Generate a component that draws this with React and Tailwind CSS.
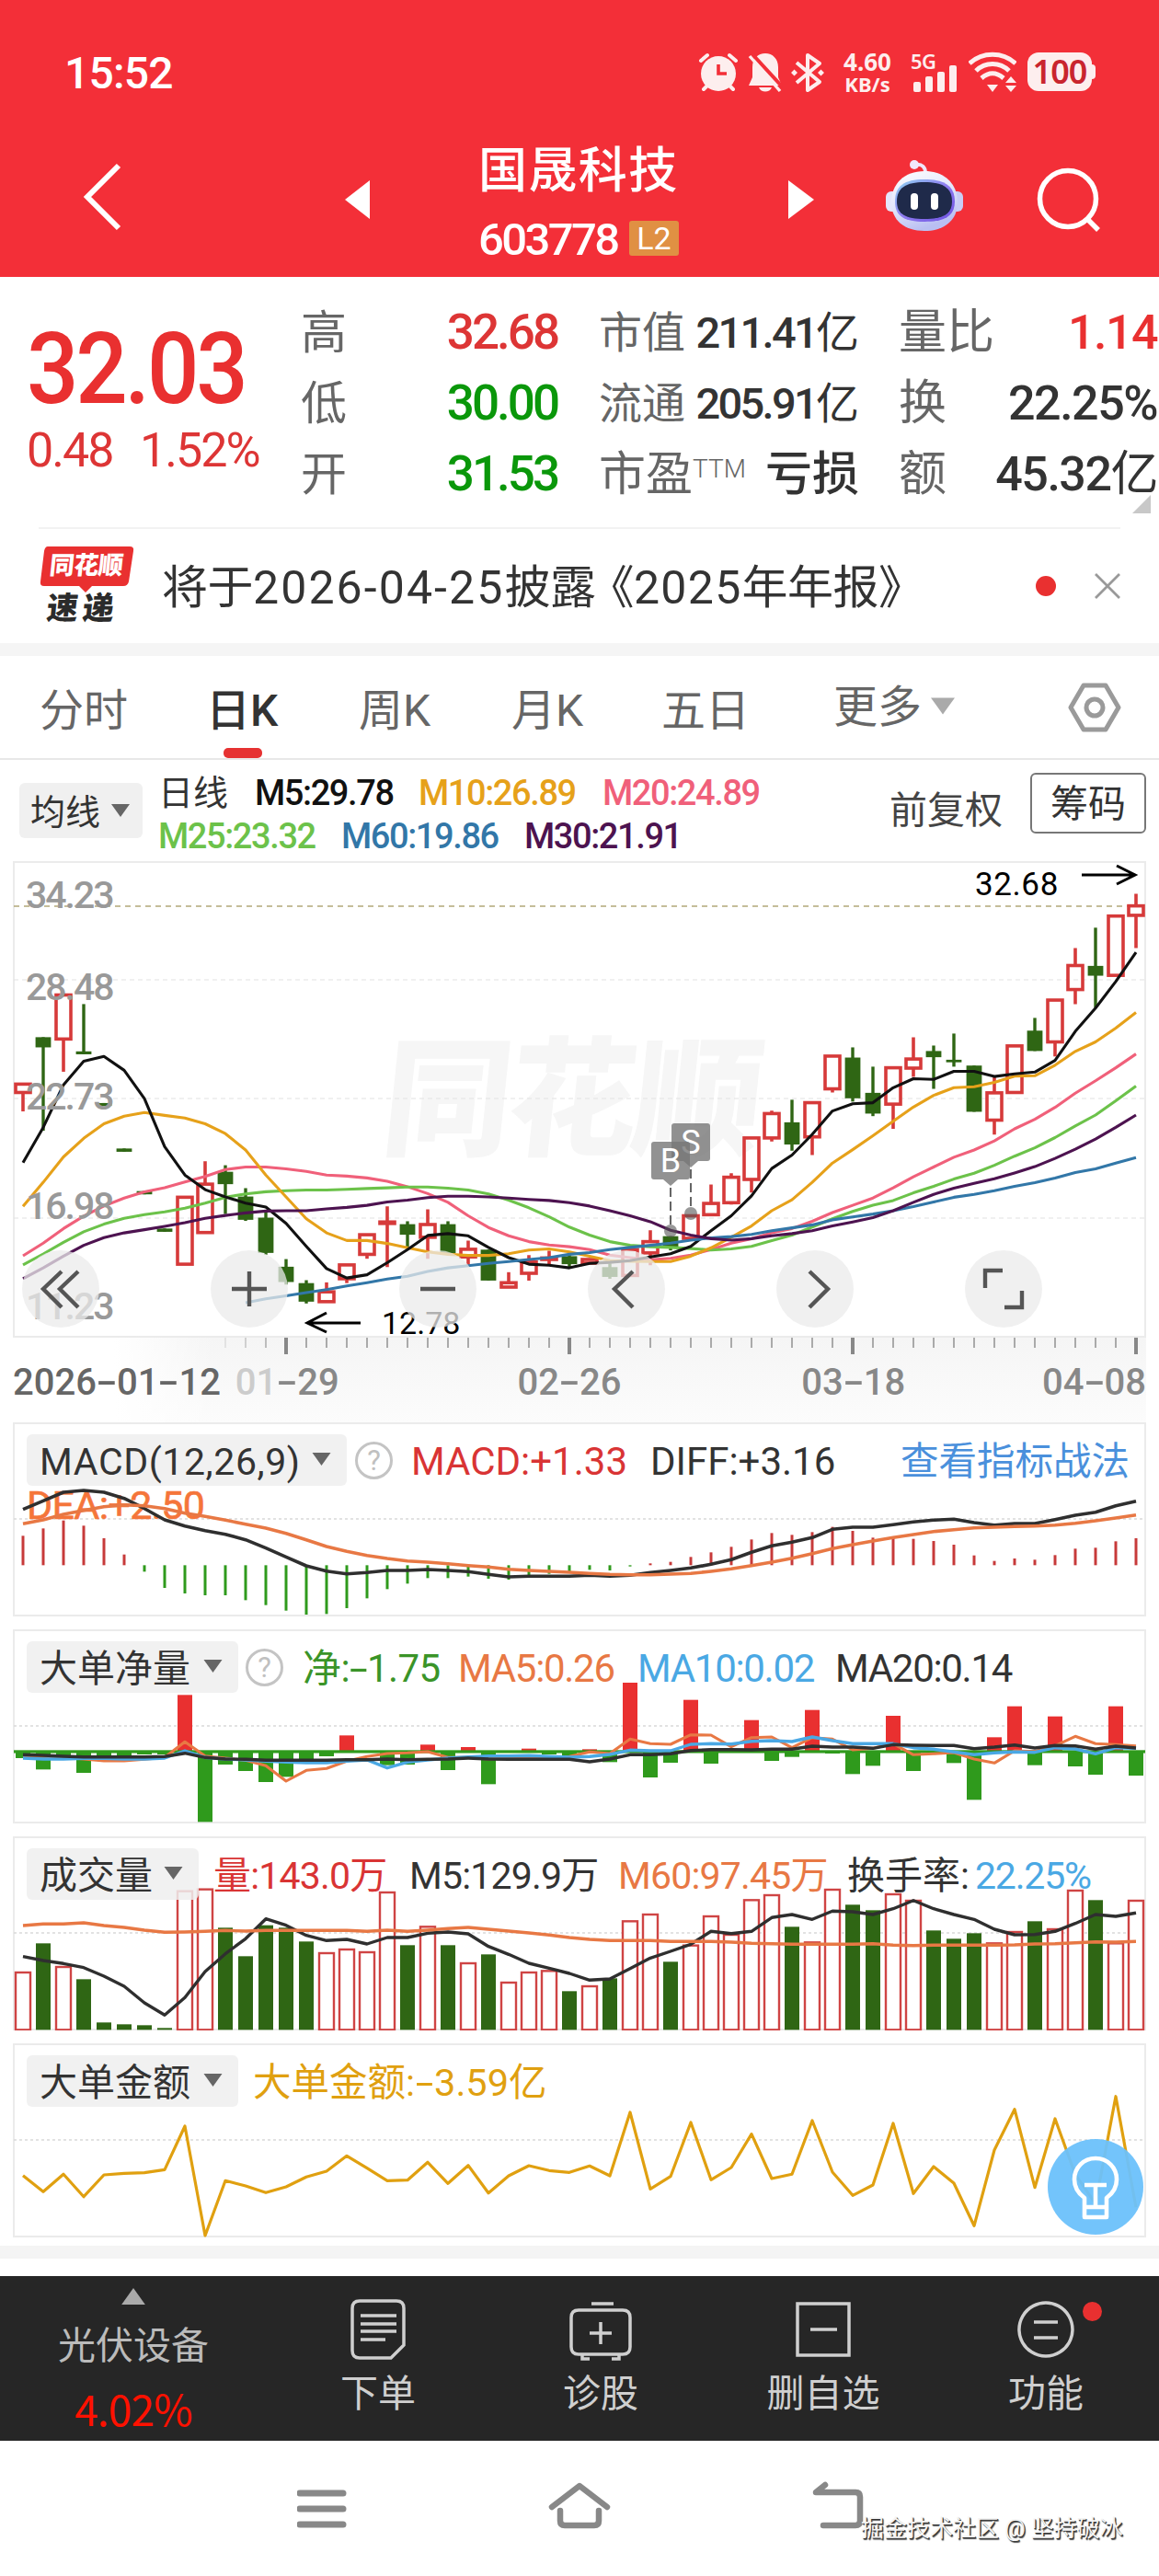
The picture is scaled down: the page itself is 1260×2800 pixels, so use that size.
import React from 'react';

const STEP = 22;
const FIRST_X = 25;
const xAt = (i) => FIRST_X + i * STEP;

// [colour, high, body top, body bottom, low]
const CANDLES = [
  ['r', 655, 655, 678, 730], ['g', 526, 526, 554, 783], ['r', 410, 410, 531, 621],
  ['g', 435, 565, 573, 573], ['g', 707, 707, 715, 715], ['g', 832, 832, 841, 841],
  ['g', 949, 949, 958, 958], ['g', 1052, 1052, 1061, 1061], ['r', 966, 966, 1150, 1150],
  ['r', 867, 930, 1063, 1063], ['g', 878, 896, 930, 1012], ['g', 941, 964, 1028, 1031],
  ['g', 1005, 1022, 1119, 1124], ['g', 1136, 1157, 1199, 1206], ['g', 1194, 1202, 1253, 1258],
  ['r', 1200, 1226, 1253, 1253], ['r', 1152, 1152, 1190, 1202], ['r', 1069, 1069, 1123, 1135],
  ['r', 991, 1034, 1038, 1158], ['g', 1032, 1040, 1069, 1105], ['r', 999, 1041, 1076, 1135],
  ['g', 1032, 1040, 1120, 1120], ['r', 1085, 1109, 1130, 1154], ['g', 1110, 1110, 1195, 1195],
  ['r', 1172, 1201, 1213, 1213], ['r', 1125, 1144, 1175, 1195], ['r', 1113, 1133, 1137, 1152],
  ['g', 1125, 1128, 1150, 1158], ['r', 1135, 1137, 1147, 1147], ['g', 1148, 1158, 1185, 1190],
  ['r', 1110, 1110, 1181, 1181], ['r', 1057, 1088, 1119, 1153], ['g', 1073, 1073, 1102, 1112],
  ['r', 1017, 1017, 1079, 1079], ['r', 931, 983, 1014, 1014], ['r', 900, 911, 981, 986],
  ['r', 803, 803, 917, 953], ['r', 728, 736, 803, 813], ['g', 698, 760, 821, 838],
  ['r', 706, 706, 800, 850], ['r', 578, 578, 668, 678], ['g', 554, 582, 694, 703],
  ['g', 607, 679, 736, 743], ['r', 610, 610, 710, 778], ['r', 526, 586, 611, 635],
  ['g', 549, 564, 581, 668], ['g', 516, 588, 595, 607], ['g', 604, 604, 731, 731],
  ['r', 633, 679, 754, 794], ['r', 550, 550, 678, 678], ['g', 473, 508, 564, 564],
  ['r', 424, 424, 539, 579], ['r', 281, 329, 395, 435], ['g', 225, 330, 357, 445],
  ['r', 193, 193, 356, 356], ['r', 132, 165, 191, 281],
];

const MA_LINES = [
  { color: '#f0607a', from: 0, data: [1127,1092,1052,1018,990,968,951,940,924,909,890,883,883,888,895,905,908,913,922,937,956,980,1017,1049,1072,1088,1097,1102,1110,1125,1132,1138,1134,1125,1110,1092,1080,1064,1052,1032,1008,988,968,940,910,883,856,836,811,778,752,719,680,646,610,572] },
  { color: '#6cc24a', from: 0, data: [1152,1122,1090,1061,1040,1024,1014,1006,996,982,966,957,951,948,946,946,944,942,940,938,938,941,946,957,974,995,1020,1048,1070,1088,1098,1102,1104,1107,1111,1108,1101,1085,1070,1048,1025,1005,988,975,954,936,916,900,878,853,830,802,770,740,701,660] },
  { color: '#e6a11a', from: 0, data: [991,925,855,804,764,743,733,741,748,764,791,836,905,965,1025,1064,1085,1085,1093,1105,1116,1123,1126,1126,1121,1111,1108,1116,1128,1140,1142,1143,1143,1128,1105,1076,1045,1003,973,925,872,835,797,757,718,686,665,662,650,633,632,603,565,539,501,458] },
  { color: '#111111', from: 0, data: [871,774,657,592,579,617,695,827,905,945,965,982,993,1038,1101,1162,1188,1179,1146,1110,1071,1066,1072,1104,1132,1150,1153,1160,1148,1145,1140,1130,1121,1101,1058,1017,962,887,850,793,729,709,706,665,640,642,620,620,634,627,622,590,510,446,373,293] },
  { color: '#3277a8', from: 11, data: [1256,1245,1237,1228,1220,1210,1201,1191,1183,1170,1160,1154,1148,1143,1137,1132,1123,1118,1110,1104,1098,1092,1084,1078,1074,1068,1058,1050,1042,1028,1020,1012,1003,992,979,966,958,948,936,926,913,898,888,872,857] },
  { color: '#4d1350', from: 0, data: [1190,1160,1128,1098,1077,1064,1055,1046,1036,1024,1016,1009,1004,1003,1003,998,994,988,979,974,967,963,963,965,968,972,975,981,990,1003,1017,1033,1057,1070,1080,1084,1080,1072,1066,1058,1045,1034,1022,1003,980,958,941,928,915,899,882,859,834,806,774,740] },
];

const MACD_BARS = [417,393,367,384,425,478,534,587,605,611,611,627,643,661,674,672,653,621,591,573,555,555,550,557,560,545,541,535,528,530,517,507,502,486,471,453,429,408,414,405,388,401,423,424,427,434,446,481,499,491,495,480,459,456,435,425];
const MACD_DIFF = [331,303,275,269,275,295,328,365,385,400,412,430,457,486,515,532,541,537,530,530,527,530,534,543,551,549,549,549,546,549,546,537,530,522,510,495,471,450,438,423,396,389,389,381,372,366,363,374,382,377,377,364,350,340,319,304];
const MACD_DEA = [378,365,347,334,322,316,319,328,343,354,366,379,392,409,430,452,468,481,491,499,503,508,514,519,526,530,533,536,540,543,544,544,542,540,533,525,514,503,490,475,459,446,434,423,413,403,397,391,389,387,385,382,376,368,359,349];

const NET_BARS = [452,489,447,500,447,445,440,440,246,660,473,494,530,513,460,446,378,433,475,473,408,491,416,537,433,421,440,447,423,465,206,515,467,262,470,433,328,461,448,295,437,504,477,314,494,432,468,588,384,283,475,316,479,506,283,509];
const NET_MA5 = [445,447,450,455,461,461,456,450,399,445,452,459,477,527,492,486,462,447,437,435,431,450,450,455,450,452,450,447,432,437,390,405,407,376,377,415,385,383,418,385,390,425,420,405,441,438,434,455,468,428,430,412,381,405,408,412];
const NET_MA10 = [452,455,455,453,453,455,455,452,428,450,455,458,462,465,467,467,462,458,484,465,458,452,448,445,445,444,447,449,447,440,426,428,428,407,405,406,397,395,398,383,395,405,405,405,418,423,432,441,435,432,433,418,422,438,418,420];
const NET_MA20 = [441,443,446,448,448,448,448,447,436,450,455,456,459,459,459,459,457,457,455,457,456,455,452,455,456,456,456,456,464,455,441,441,438,427,424,424,425,423,423,413,416,416,420,408,410,411,411,421,416,409,419,411,412,423,413,419];

const VOL_BARS = 'r458 g366 r440 g483 g624 g630 g633 g642 r193 r187 g315 g408 g307 g315 g360 r395 r383 r392 r197 g372 r309 g372 r428 g402 r491 r458 r453 g522 r503 g480 r291 r269 g426 r370 r275 r335 r222 r206 g312 r360 r188 g240 g258 r203 r224 g324 g351 g333 r363 r326 g294 r317 r191 g225 r363 r224'.split(' ');
const VOL_M5 = [409,422,432,445,473,506,560,600,543,458,400,351,286,307,340,357,353,368,347,347,333,329,335,376,402,431,447,464,486,482,448,414,392,369,327,334,327,282,272,288,261,263,272,253,226,253,272,288,320,338,337,327,301,272,278,267];
const VOL_M60 = [308,303,303,299,308,314,323,330,329,327,324,326,324,324,324,324,324,327,323,327,323,318,314,320,326,332,339,347,353,357,357,357,360,360,360,362,366,367,369,369,369,369,367,372,373,372,372,372,372,371,368,367,364,361,362,360];

const AMOUNT = [463,516,459,532,461,456,454,444,302,659,480,497,519,500,468,449,399,439,480,478,420,489,430,520,464,431,447,453,432,464,257,507,466,290,477,437,328,473,459,284,452,528,494,293,522,434,488,627,380,247,502,278,460,555,205,567];

const Line = ({ data, y, color, width = 3.1, from = 0 }) => (
  <polyline
    points={data.map((v, i) => `${xAt(i + from)},${y(v).toFixed(1)}`).join(' ')}
    fill="none"
    stroke={color}
    strokeWidth={width}
    strokeLinejoin="round"
  />
);

const Caret = ({ className = '' }) => (
  <svg viewBox="0 0 20 14" className={`shrink-0 ${className}`}>
    <path d="M0 0H20L10 14Z" fill="currentColor" />
  </svg>
);

const StatusBar = () => (
  <div className="h-[156px] pt-[56px] pl-[70px] pr-[69px] flex items-start text-white">
    <span className="flex-1 text-[48px] font-medium leading-[48px] tracking-[-0.8px]">15:52</span>
    <svg viewBox="0 0 44 44" className="w-11 h-11 mr-[10px] mt-px">
      <g fill="none" stroke="#fdeeee" strokeWidth="4" strokeLinecap="round">
        <path d="M3 9L10 3M34 3L41 9M6 40L11 35M38 40L33 35" />
      </g>
      <circle cx="22" cy="23" r="19" fill="#fdeeee" />
      <path d="M22 13V23H31" fill="none" stroke="#f32f38" strokeWidth="3.6" />
    </svg>
    <svg viewBox="0 0 38 44" className="w-[38px] h-11 mr-[9px] mt-px">
      <path d="M19 1C27 1 33 7 33 16V27L37 36H1L5 27V16C5 7 11 1 19 1Z" fill="#fdeeee" />
      <path d="M12 38H26C24 44 14 44 12 38Z" fill="#fdeeee" />
      <path d="M4 1L38 38" stroke="#f32f38" strokeWidth="4" />
      <path d="M2 4L35 42" stroke="#fdeeee" strokeWidth="3.4" />
    </svg>
    <svg viewBox="0 0 36 44" className="w-9 h-11 mr-[18px] mt-px">
      <g fill="none" stroke="#fdeeee" strokeWidth="4" strokeLinejoin="round">
        <path d="M6 11L31 32L18 41V3L31 12L6 33" />
      </g>
      <path d="M0 22L3.500 18.500L7 22L3.500 25.500ZM29 22L32.500 18.500L36 22L32.500 25.500Z" fill="#fdeeee" />
    </svg>
    <div className="w-[58px] mr-[18px] flex flex-col items-center font-['Noto_Sans',sans-serif] font-bold text-[#fdeeee]">
      <span className="text-[26px] leading-[22px] h-[23px]">4.60</span>
      <span className="text-[22px] leading-[24px]">KB/s</span>
    </div>
    <div className="relative w-[52px] h-11 mr-[11px] font-['Noto_Sans',sans-serif] font-semibold text-[#fdeeee]">
      <span className="absolute left-0 top-0 text-[22px] leading-[20px] tracking-[-0.5px]">5G</span>
      <svg viewBox="0 0 52 44" className="absolute inset-0 w-[52px] h-11">
        <g fill="#fdeeee">
          <rect x="3" y="33" width="8" height="11" rx="2" />
          <rect x="16" y="27" width="8" height="17" rx="2" />
          <rect x="29" y="22" width="8" height="22" rx="2" />
          <rect x="42" y="15" width="8" height="29" rx="2" />
        </g>
      </svg>
    </div>
    <svg viewBox="0 0 52 44" className="w-[52px] h-11 mr-[12px]">
      <g fill="none" stroke="#fdeeee" strokeWidth="5">
        <path d="M1 13C15 0 37 0 51 13M8 21C18 11 34 11 44 21M14 29C22 22 30 22 38 29" />
      </g>
      <path d="M20 36H32L26 44ZM40 34L46 27L52 34ZM40 37H52L46 44Z" fill="#fdeeee" />
    </svg>
    <div className="flex items-center mt-px">
      <div className="w-[70px] h-[42px] rounded-[12px] bg-[#fdeeee] flex items-center justify-center text-[#c9252e] text-[36px] font-semibold leading-none font-['Noto_Sans',sans-serif] tracking-[-1px]">
        100
      </div>
      <div className="w-[4px] h-[16px] rounded-r bg-[#fdeeee]" />
    </div>
  </div>
);

const Robot = () => (
  <svg viewBox="0 0 84 78" className="w-[84px] h-[78px]">
    <defs>
      <linearGradient id="shell" x1="0" y1="0" x2="0.4" y2="1">
        <stop offset="0" stopColor="#ffffff" />
        <stop offset="0.6" stopColor="#dfe3fa" />
        <stop offset="1" stopColor="#b9bff2" />
      </linearGradient>
      <linearGradient id="rim" x1="0" y1="0" x2="1" y2="1">
        <stop offset="0" stopColor="#8fd6f2" />
        <stop offset="0.5" stopColor="#8f7cf0" />
        <stop offset="1" stopColor="#6c4fe0" />
      </linearGradient>
    </defs>
    <path d="M32 5C40 4 43 8 43 14" fill="none" stroke="#efe6fb" strokeWidth="4" />
    <circle cx="31" cy="5" r="5" fill="#f1e8fb" />
    <rect x="0" y="34" width="14" height="22" rx="6" fill="#e4e6fb" />
    <rect x="70" y="34" width="14" height="22" rx="6" fill="#c9cdf5" />
    <path d="M42 12C64 12 78 26 78 46C78 65 64 77 42 77C20 77 6 65 6 46C6 26 20 12 42 12Z" fill="url(#shell)" />
    <path d="M42 21C64 21 75 28 75 45C75 61 64 67 42 67C20 67 10 61 10 45C10 28 20 21 42 21Z" fill="url(#rim)" />
    <path d="M42 24C62 24 72 30 72 45C72 59 62 64 42 64C22 64 12 59 12 45C12 30 22 24 42 24Z" fill="#1f2a4a" />
    <rect x="27" y="36" width="8" height="18" rx="4" fill="#fff" />
    <rect x="49" y="36" width="8" height="18" rx="4" fill="#fff" />
  </svg>
);

const TitleBar = () => (
  <div className="h-[145px] flex items-start text-white">
    <svg viewBox="0 0 42 76" className="w-[42px] h-[76px] ml-[90px] mt-5">
      <path d="M39 4L5 38L39 72" fill="none" stroke="#fff" strokeWidth="6" />
    </svg>
    <svg viewBox="0 0 27 42" className="w-[27px] h-[42px] ml-[243px] mt-[40px]">
      <path d="M27 0V42L0 21Z" fill="#fff" />
    </svg>
    <div className="w-[218px] ml-[118px]">
      <h1 className="text-[53px] leading-[60px] font-medium tracking-[1.4px] whitespace-nowrap">国晟科技</h1>
      <div className="flex items-center justify-between mt-[24px] h-[38px]">
        <span className="text-[49px] leading-none font-medium tracking-[-2.600px] mt-[3px]">603778</span>
        <span className="w-[54px] h-[38px] rounded-[3px] bg-[#e09043] text-[34px] leading-[39px] text-center">L2</span>
      </div>
    </div>
    <svg viewBox="0 0 28 42" className="w-[28px] h-[42px] ml-[119px] mt-[40px]">
      <path d="M0 0V42L28 21Z" fill="#fff" />
    </svg>
    <div className="ml-[78px] mt-[18px]">
      <Robot />
    </div>
    <svg viewBox="0 0 72 72" className="w-[72px] h-[72px] ml-[79px] mt-[25px]">
      <g fill="none" stroke="#fff" strokeWidth="5.5">
        <circle cx="35" cy="35" r="30.5" />
        <path d="M56 57L68 69" />
      </g>
    </svg>
  </div>
);

const Quote = () => (
  <section className="relative h-[272px] pt-[22px] pl-[29px] flex leading-none text-[#333]">
    <div className="w-[298px] pt-[24px] text-[#e93030]">
      <div className="text-[108px] font-medium tracking-[-3.5px] scale-x-[0.92] origin-left whitespace-nowrap">32.03</div>
      <div className="flex mt-[9px] text-[52px] tracking-[-2px] text-[#dd3535]">
        <span className="w-[123px]">0.48</span>
        <span>1.52%</span>
      </div>
    </div>
    <div className="w-[279px] flex flex-col text-[#dd3535]">
      {[['高', '32.68'], ['低', '30.00'], ['开', '31.53']].map(([k, v], i) => (
        <div key={k} className="h-[77px] flex items-center justify-between text-[53px] tracking-[-3px]">
          <span className="text-[50px] text-[#666]">{k}</span>
          <span className={i ? 'font-medium text-[#0a970a]' : 'font-medium'}>{v}</span>
        </div>
      ))}
    </div>
    <div className="w-[283px] ml-[45px] flex flex-col text-[47px]">
      {[['市值', '211.41'], ['流通', '205.91']].map(([k, v]) => (
        <div key={k} className="h-[77px] flex items-center justify-between">
          <span className="text-[#666]">{k}</span>
          <span className="font-medium tracking-[-2.7px]">{v}<span className="font-normal tracking-normal">亿</span></span>
        </div>
      ))}
      <div className="h-[77px] flex items-center justify-between text-[51px] tracking-normal">
        <span className="flex items-start text-[#666]">
          市盈<span className="text-[28px] font-light mt-[6px]">TTM</span>
        </span>
        <span className="font-medium">亏损</span>
      </div>
    </div>
    <div className="w-[281px] ml-[43px] flex flex-col text-[52px]">
      {[['量比', '1.14', ''], ['换', '22.25%', ''], ['额', '45.32', '亿']].map(([k, v, unit], i) => (
        <div key={k} className="h-[77px] flex items-center justify-between">
          <span className="text-[#666]">{k}</span>
          <span className={i ? 'font-medium tracking-[-1.5px]' : 'font-medium tracking-[-1.5px] text-[#e93030]'}>
            {v}<span className="font-normal">{unit}</span>
          </span>
        </div>
      ))}
    </div>
    <svg viewBox="0 0 20 20" className="absolute left-[1231px] top-[237px] w-5 h-5">
      <path d="M20 0V20H0Z" fill="#c8c8c8" />
    </svg>
  </section>
);

const Notice = () => (
  <section className="mx-[42px] h-[126px] border-t-2 border-[#f2f2f2] flex items-center">
    <div className="w-[104px] h-[84px] mt-[-2px] relative flex flex-col items-center">
      <svg viewBox="0 0 104 52" className="absolute left-0 top-0 w-[104px] h-[52px]">
        <path d="M10 0H99Q104 0 103 5L98 38Q97 43 92 43H58L51 50L44 43H6Q1 43 2 38L6 5Q7 0 10 0Z" fill="#e93030" />
      </svg>
      <span className="relative text-white font-black text-[27px] leading-[43px] -skew-x-6 tracking-[-0.5px]">同花顺</span>
      <span className="relative text-[#2b2b2b] font-black text-[34px] leading-[36px] mt-[6px] -skew-x-6 tracking-[5px] pr-2">速递</span>
    </div>
    <p className="ml-[30px] mt-[3px] text-[50px] leading-none text-[#333] whitespace-nowrap flex tracking-[-0.5px]">
      将于<span className="tracking-[2.1px]">2026-04-25</span>披露<span className="ml-[-8px]">《</span>
      <span className="tracking-[1.3px]">2025</span>年年报》
    </p>
    <span className="absolute left-[1126px] w-[22px] h-[22px] rounded-full bg-[#e93030]" />
    <svg viewBox="0 0 28 28" className="absolute left-[1190px] w-7 h-7">
      <path d="M1 1L27 27M27 1L1 27" stroke="#999" strokeWidth="2.800" />
    </svg>
  </section>
);

const TABS = [
  ['分时', 'w-[187px]'],
  ['日K', 'w-[160px]'],
  ['周K', 'w-[166px]'],
  ['月K', 'w-[163px]'],
  ['五日', 'w-[187px]'],
];

const Tabs = () => (
  <nav className="h-[113px] pl-[43px] border-b-2 border-[#e8e8e8] flex text-[48px] leading-[119px] text-[#666]">
    {TABS.map(([name, width]) => (
      <div key={name} className={`${width} relative`}>
        {name === '日K' ? (
          <>
            <span className="ml-[-6px] font-medium text-[#333]">{name}</span>
            <span className="absolute left-[13px] bottom-0 w-[42px] h-[11px] rounded-[5px] bg-[#e63232]" />
          </>
        ) : (
          name
        )}
      </div>
    ))}
    <div className="w-[256px] flex items-center">
      更多
      <Caret className="w-[26px] h-[21px] ml-[10px] mt-[-2px] text-[#aaa]" />
    </div>
    <svg viewBox="0 0 58 54" className="w-[58px] h-[54px] mt-[29px] ml-[-1px]">
      <g fill="none" stroke="#9a9a9a" strokeWidth="5" strokeLinejoin="round">
        <path d="M17 3H41L55 27L41 51H17L3 27Z" />
        <circle cx="29" cy="27" r="9" />
      </g>
    </svg>
  </nav>
);

const MaLegend = () => (
  <div className="h-[110px] flex items-start leading-none text-[38px]">
    <button className="ml-[21px] mt-[25px] w-[134px] h-[60px] rounded-md bg-[#f0f0f0] pl-[12px] pr-[14px] flex items-center justify-between text-[#333]">
      <span className="text-[38px] mt-[3px]">均线</span>
      <Caret className="w-5 h-[14px] text-[#666]" />
    </button>
    <div className="ml-[17px] w-[795px] font-medium tracking-[-1.4px]">
      <div className="h-[49px] pt-[17px] flex">
        <span className="w-[105px] font-normal text-[38px] tracking-normal text-[#333]">日线</span>
        <span className="w-[178px] text-[#111]">M5:29.78</span>
        <span className="w-[200px] text-[#e6a11a]">M10:26.89</span>
        <span className="text-[#f0607a]">M20:24.89</span>
      </div>
      <div className="h-[49px] pt-[15px] flex">
        <span className="w-[199px] text-[#6cc24a]">M25:23.32</span>
        <span className="w-[199px] text-[#3277a8]">M60:19.86</span>
        <span className="text-[#4d1350]">M30:21.91</span>
      </div>
    </div>
    <span className="mt-[35px] w-[153px] text-[41px] text-[#444]">前复权</span>
    <button className="mt-[14px] w-[126px] h-[66px] pt-[3px] rounded-md border-2 border-[#777] text-[41px] text-[#333]">筹码</button>
  </div>
);

const ky = (v) => (v - 42) / 2.529;

const Candle = ({ i, data: [kind, high, top, bottom, low] }) => {
  const x = xAt(i);
  const h = ky(bottom) - ky(top);
  if (kind === 'g') {
    return (
      <g fill="#2f6614">
        <rect x={x - 1.7} y={ky(high)} width="3.4" height={ky(low) - ky(high)} />
        <rect x={x - 8.4} y={ky(top)} width="16.8" height={h} />
      </g>
    );
  }
  return (
    <g stroke="#d63a3a" strokeWidth="3.6" fill="none">
      <path d={`M${x} ${ky(high)}V${ky(top)}M${x} ${ky(bottom)}V${ky(low)}`} />
      <rect x={x - 8} y={ky(top)} width="16" height={h} />
    </g>
  );
};

const Marker = ({ x, y, label, dot }) => (
  <g>
    <path d={`M${x} ${y + 50}V${dot}`} stroke="#555" strokeWidth="1.8" strokeDasharray="10 5" />
    <circle cx={x} cy={dot + 4} r="7" fill="#555" opacity="0.6" />
    <path
      d={`M${x - 18} ${y}h36q3 0 3 3v35q0 3 -3 3h-10l-8 7l-8 -7h-10q-3 0 -3 -3v-35q0 -3 3 -3z`}
      fill="#777"
      opacity="0.8"
    />
    <text x={x} y={y + 33} textAnchor="middle" fill="#fff" fontSize="36">{label}</text>
  </g>
);

const PRICES = [['34.23', 'top-[15px]'], ['28.48', 'top-[115px]'], ['22.73', 'top-[234px]'], ['16.98', 'top-[353px]'], ['11.23', 'top-[462px]']];

const CONTROLS = [
  'M43 23L23 42L43 62M61 23L41 42L61 62',
  'M42 23V61M23 42H61',
  'M23 42H61',
  'M49 23L29 42L49 62',
  'M36 23L56 42L36 62',
  'M22 41V22H41M62 44V62H43',
];

const KChart = () => (
  <div className="relative mx-[14px] h-[518px] border-2 border-[#ebebeb]">
    <div className="absolute left-[401px] top-[179px] text-[140px] leading-[160px] font-black -skew-x-6 tracking-[-4px] text-[#f6f6f6]">同花顺</div>
    <svg viewBox="14 0 1232 518" className="absolute left-[-2px] top-[-2px] w-[1232px] h-[518px]">
      <g stroke="#e2e2e2" strokeWidth="1.2" strokeDasharray="5 4">
        <path d="M15 129H1245M15 258H1245M15 388H1245" />
      </g>
      <path d="M15 49H1245" stroke="#b3a878" strokeWidth="1.6" strokeDasharray="6 5" />
      {CANDLES.map((c, i) => <Candle key={i} i={i} data={c} />)}
      {MA_LINES.map((l) => <Line key={l.color} y={ky} {...l} />)}
      <Marker x={751} y={285} label="S" dot={379} />
      <Marker x={729} y={305} label="B" dot={398} />
      <g fill="none" stroke="#000" strokeWidth="3">
        <path d="M392 502H334M355 491L334 502L355 512M1176 15H1234M1214 5L1234 15L1214 25" />
      </g>
    </svg>
    {PRICES.map(([p, top]) => (
      <span key={p} className={`absolute left-[12px] ${top} text-[41px] leading-none font-medium tracking-[-2px] text-[#999]`}>{p}</span>
    ))}
    <span className="absolute left-[1044px] top-[6px] text-[35px] leading-none tracking-[0.6px] text-black">32.68</span>
    <span className="absolute left-[399px] top-[483px] text-[34px] leading-none text-black">12.78</span>
    <div className="absolute left-[8px] top-[421px] flex gap-[121px]">
      {CONTROLS.map((d) => (
        <svg key={d} viewBox="0 0 84 84" className="w-[84px] h-[84px] rounded-full bg-[#ebebeb]/75">
          <path d={d} fill="none" stroke="#555" strokeWidth="4.4" />
        </svg>
      ))}
    </div>
  </div>
);

const Dash = ({ className = 'w-[22px]' }) => (
  <span className={`${className} inline-block text-center scale-x-[1.7]`}>-</span>
);

const DateText = ({ value, className }) => (
  <span className={`flex ${className}`}>
    {value.split('-').map((p, i) => (
      <React.Fragment key={i}>
        {i > 0 && <Dash />}
        {p}
      </React.Fragment>
    ))}
  </span>
);

const DateAxis = () => (
  <div className="relative mx-[14px] h-[92px] bg-gradient-to-b from-[#f5f5f5] to-[#fcfcfc]">
    <div className="absolute inset-y-0 left-0 w-[220px] bg-gradient-to-r from-white via-white to-transparent" />
    <svg viewBox="14 0 1232 20" className="absolute left-0 top-0 w-[1232px] h-5">
      {Array.from({ length: 46 }, (_, k) => k + 10).map((i) => {
        const major = (i - 13) % 14 === 0;
        return (
          <rect
            key={i}
            x={xAt(i) - (major ? 2 : 1)}
            y="0"
            width={major ? 4 : 2}
            height={major ? 18 : 11}
            fill={major ? '#888' : '#aaa'}
            opacity={i < 13 ? (i - 9) * 0.25 : 1}
          />
        );
      })}
    </svg>
    <div className="relative pt-[29px] flex text-[40px] leading-none font-medium text-[#888]">
      <DateText value="2026-01-12" className="w-[242px] text-[#666]" />
      <span className="w-[307px] flex"><span className="text-[#ccc]">01</span><DateText value="-29" className="" /></span>
      <DateText value="02-26" className="w-[309px]" />
      <DateText value="03-18" className="w-[262px]" />
      <DateText value="04-08" className="" />
    </div>
  </div>
);

const Help = () => (
  <span className="shrink-0 w-[41px] h-[41px] rounded-full border-[3px] border-[#c4c4c4] text-[#c0c0c0] text-[31px] leading-[36px] text-center">?</span>
);

const Panel = ({ name, width, mid, drawing, children }) => (
  <section className="relative mx-[14px] h-[211px] mb-[14px] border-2 border-[#ebebeb]">
    <svg viewBox="14 0 1232 211" className="absolute left-[-2px] top-[-2px] w-[1232px] h-[211px]">
      <path d={`M15 ${mid}H1245`} stroke="#d9d9d9" strokeWidth="1.400" strokeDasharray="3 3" />
      {drawing}
    </svg>
    <div className="relative pt-[11px] pl-[13px] flex items-center text-[41px] leading-[46px] whitespace-nowrap">
      <button className={`${width} h-[56px] rounded-md bg-[#eeeeee]/85 pl-[14px] pr-[17px] flex items-center justify-between text-[#333]`}>
        <span className="mt-[3px]">{name}</span>
        <Caret className="w-[21px] h-[14px] mt-[-3px] text-[#666]" />
      </button>
      {children}
    </div>
  </section>
);

const my = (v) => (v - 47) / 3;
const ny = (v) => (v - 32) / 3;
const vy = (v) => (v - 17) / 3;

const MacdPanel = () => (
  <Panel
    name={<span className="tracking-[0.6px]">MACD(12,26,9)</span>}
    width="w-[348px]"
    mid={105}
    drawing={
      <>
        {MACD_BARS.map((v, i) => (
          <path key={i} d={`M${xAt(i)} ${my(513)}V${my(v)}`} stroke={v < 513 ? '#c73a3a' : '#2f9a1c'} strokeWidth="3" />
        ))}
        <text x="29" y="105" fontSize="43" fill="#f5753a" stroke="#f5753a" strokeWidth="0.6" textLength="194">DEA:+2.50</text>
        <Line data={MACD_DIFF} y={my} color="#2f2f2f" width={3.6} />
        <Line data={MACD_DEA} y={my} color="#e87844" width={3.6} />
      </>
    }
  >
    <span className="ml-[9px] flex"><Help /></span>
    <span className="mt-[3px] ml-[20px] w-[260px] text-[42px] text-[#d93434]">MACD:+1.33</span>
    <span className="mt-[3px] w-[272px] text-[42px] text-[#333]">DIFF:+3.16</span>
    <span className="mt-[3px] text-[41.5px] text-[#4a90dc]">查看指标战法</span>
  </Panel>
);

const NetPanel = () => (
  <Panel
    name="大单净量"
    width="w-[230px]"
    mid={105}
    drawing={
      <>
        {NET_BARS.map((v, i) =>
          v < 428 ? (
            <rect key={i} x={xAt(i) - 8} y={ny(v)} width="16" height={ny(428) - ny(v)} fill="#e93030" />
          ) : (
            <rect key={i} x={xAt(i) - 8} y={ny(428)} width="16" height={ny(v) - ny(428)} fill="#2f9a1c" />
          )
        )}
        <rect x="15" y={ny(426)} width="1230" height="3.2" fill="#2f9a1c" />
        <Line data={NET_MA5} y={ny} color="#e87844" />
        <Line data={NET_MA10} y={ny} color="#4aa8e4" width={3.4} />
        <Line data={NET_MA20} y={ny} color="#2f2f2f" width={3.4} />
      </>
    }
  >
    <span className="ml-[8px] flex"><Help /></span>
    <span className="mt-[3px] ml-[21px] w-[169px] text-[42px] tracking-[-0.6px] text-[#3a9428]">
      净:<Dash className="w-[19px]" />1.75
    </span>
    <span className="mt-[3px] w-[195px] text-[42px] tracking-[-1.3px] text-[#e87844]">MA5:0.26</span>
    <span className="mt-[3px] w-[215px] text-[42px] tracking-[-1.3px] text-[#4aa8e4]">MA10:0.02</span>
    <span className="mt-[3px] text-[42px] tracking-[-1.3px] text-[#333]">MA20:0.14</span>
  </Panel>
);

const VolumePanel = () => (
  <Panel
    name="成交量"
    width="w-[187px]"
    mid={105}
    drawing={
      <>
        {VOL_BARS.map((bar, i) => {
          const v = Number(bar.slice(1));
          return bar[0] === 'g' ? (
            <rect key={i} x={xAt(i) - 8} y={vy(v)} width="16" height={vy(648) - vy(v)} fill="#2f6614" />
          ) : (
            <rect key={i} x={xAt(i) - 8} y={vy(v) + 1} width="16" height={vy(648) - vy(v) - 1} fill="#fff" stroke="#cf4444" strokeWidth="2.4" />
          );
        })}
        <Line data={VOL_M5} y={vy} color="#2f2f2f" width={3.4} />
        <Line data={VOL_M60} y={vy} color="#e87844" width={3.4} />
      </>
    }
  >
    <span className="mt-[3px] ml-[16px] w-[213px] tracking-[-0.8px] text-[#d93434]">量:143.0万</span>
    <span className="mt-[3px] w-[227px] tracking-[-0.8px] text-[#333]">M5:129.9万</span>
    <span className="mt-[3px] w-[249px] tracking-[-0.8px] text-[#e87844]">M60:97.45万</span>
    <span className="mt-[3px] w-[139px] text-[#333]">换手率:</span>
    <span className="mt-[3px] tracking-[-1.2px] text-[#4aa8e4]">22.25%</span>
  </Panel>
);

const AmountPanel = () => (
  <Panel
    name="大单金额"
    width="w-[230px]"
    mid={105}
    drawing={<Line data={AMOUNT} y={ny} color="#e0a010" width={3.2} />}
  >
    <span className="mt-[3px] ml-[16px] text-[#e0a010] text-[41.5px]">
      大单金额:<Dash className="w-[21px]" />3.59亿
    </span>
    <svg viewBox="0 0 104 104" className="absolute left-[1123px] top-[102px] w-[104px] h-[104px] rounded-full bg-[#6cc1fb]/95">
      <g fill="none" stroke="#fff" strokeWidth="4.6" strokeLinejoin="round">
        <path d="M40 74V64C33 59 29 52 29 44C29 31 39 21 52 21C65 21 75 31 75 44C75 52 71 59 64 64V74ZM40 74V85H64V74" />
        <path d="M40 50H64M52 50V73" />
      </g>
    </svg>
  </Panel>
);

const ACTIONS = [
  { label: '下单', d: 'M12 4H52Q60 4 60 12V52L46 66H12Q4 66 4 58V12Q4 4 12 4ZM13 20H52M13 29H52M13 37H52M13 46H40' },
  { label: '诊股', d: 'M22 7H46M8 14H56Q64 14 64 22V54Q64 62 56 62H8Q0 62 0 54V22Q0 14 8 14ZM32 27V51M20 39H44M12 62V67H20M44 67H52V62' },
  { label: '删自选', d: 'M4 7H60V63H4ZM18 35H47' },
  { label: '功能', d: 'M32 6A29 29 0 1 1 31.900 6ZM19 27H45M19 44H45' },
];

const BottomBar = () => (
  <div className="h-[179px] bg-[#262626] flex text-[#cfcfcf] text-[41px] leading-none">
    <div className="w-[290px] flex flex-col items-center">
      <Caret className="rotate-180 w-[30px] h-[18px] mt-[13px] text-[#aaa]" />
      <span className="mt-[25px] text-[#bbb]">光伏设备</span>
      <span className="mt-[23px] text-[46px] text-[#ff1100] font-['Noto_Sans_CJK_SC',sans-serif] tracking-[-0.8px]">4.02%</span>
    </div>
    {ACTIONS.map(({ label, d }) => (
      <div key={label} className="relative w-[242px] flex flex-col items-center">
        <svg viewBox="-2 0 68 70" className="w-[68px] h-[70px] mt-[23px]">
          <path d={d} fill="none" stroke="currentColor" strokeWidth="3.5" />
        </svg>
        <span className="mt-[15px]">{label}</span>
        {label === '功能' && <span className="absolute left-[161px] top-[28px] w-[21px] h-[21px] rounded-full bg-[#e93030]" />}
      </div>
    ))}
  </div>
);

const SystemNav = () => (
  <div className="relative h-[147px] flex items-start text-[#888]">
    <svg viewBox="0 0 54 44" className="w-[54px] h-[44px] ml-[323px] mt-[52px]">
      <path d="M3 5H50M3 22H50M3 39H50" stroke="currentColor" strokeWidth="7" strokeLinecap="round" />
    </svg>
    <svg viewBox="0 0 68 54" className="w-[68px] h-[54px] ml-[219px] mt-[43px]">
      <g fill="none" stroke="currentColor" strokeWidth="6.500" strokeLinecap="round" strokeLinejoin="round">
        <path d="M4 29L34 6L64 29M13 33V44Q13 49 18 49H50Q55 49 55 44V33" />
      </g>
    </svg>
    <svg viewBox="0 0 58 54" className="w-[58px] h-[54px] ml-[217px] mt-[43px]">
      <path d="M14 49H49Q54 49 54 44V18Q54 13 49 13H6L16 5" fill="none" stroke="currentColor" strokeWidth="6.500" strokeLinecap="round" strokeLinejoin="round" />
    </svg>
    <span className="absolute left-[936px] top-[81px] text-[25px] leading-[30px] whitespace-nowrap text-[#f4f4f4] [text-shadow:1px_1px_0_#333,1.5px_1.5px_1px_#555]">
      掘金技术社区 @ 坚持破冰
    </span>
  </div>
);

export default function App() {
  return (
    <div className="w-[1260px] h-[2800px] overflow-hidden bg-white font-['Roboto','Noto_Sans_CJK_SC',sans-serif]">
      <header className="h-[301px] bg-[#f32f38]">
        <StatusBar />
        <TitleBar />
      </header>
      <Quote />
      <Notice />
      <div className="h-[14px] bg-[#f5f5f5]" />
      <Tabs />
      <MaLegend />
      <KChart />
      <DateAxis />
      <MacdPanel />
      <NetPanel />
      <VolumePanel />
      <AmountPanel />
      <div className="h-[14px] mt-[-5px] bg-[#f4f4f4]" />
      <div className="h-[19px]" />
      <BottomBar />
      <SystemNav />
    </div>
  );
}
